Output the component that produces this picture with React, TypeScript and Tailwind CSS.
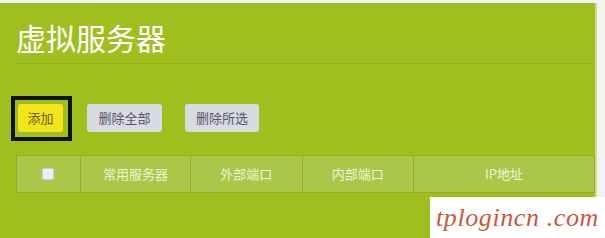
import React from "react";

const cols = [
  { w: 64, label: "" },
  { w: 111, label: "常用服务器" },
  { w: 112, label: "外部端口" },
  { w: 112, label: "内部端口" },
  { w: 182, label: "IP地址" },
];

export default function App() {
  const cjk = { fontFamily: '"Noto Sans CJK SC", "Noto Sans", sans-serif' };
  return (
    <div className="relative w-[605px] h-[238px] overflow-hidden bg-[#f3f3f3] pt-[3px]" style={cjk}>
      <div className="w-[597px] h-[235px] bg-[#a1be1f] border-r-2 border-[#cfe08c] pl-[16px] flex flex-col">
        <div className="pt-[16px] h-[61px] border-b border-[#95b21a] text-[30px] leading-[36px] text-white">
          虚拟服务器
        </div>
        <div className="mt-[40px] ml-[2px] flex items-center gap-[24px] h-[28px]">
          <div className="relative">
            <div className="w-[45px] h-[28px] rounded-[3px] bg-[#f3e51c] text-[#6b5e1a] text-[13px] flex items-center justify-center">
              添加
            </div>
            <div className="absolute left-[-7px] top-[-8px] w-[61px] h-[45px] border-[4px] border-[#111]" />
          </div>
          <div className="w-[75px] h-[28px] rounded-[3px] bg-[#d9dbe0] text-[#57546a] text-[13px] flex items-center justify-center">
            删除全部
          </div>
          <div className="w-[74px] h-[28px] rounded-[3px] bg-[#d9dbe0] text-[#57546a] text-[13px] flex items-center justify-center -ml-px">
            删除所选
          </div>
        </div>
        <div className="mt-[23px] flex h-[38px] border border-[#8ead19] bg-[#abc74a]">
          {cols.map((c, i) => (
            <div
              key={i}
              className={`h-full flex items-center justify-center text-[13px] text-[#eef4d8] ${i > 0 ? "border-l border-[#93b01c]" : ""}`}
              style={{ width: c.w - (i === 0 ? 1 : 0) }}
            >
              {i === 0 ? (
                <div className="w-[12px] h-[12px] rounded-[2px] bg-[#eceef6] border border-[#c9cde0]" />
              ) : (
                c.label
              )}
            </div>
          ))}
        </div>
      </div>
      <div className="absolute left-[430px] top-[197px] w-[175px] h-[41px] bg-white flex items-center pl-[6px]">
        <span
          className="italic text-[26px] text-[#c9583f] leading-none tracking-[0.6px]"
          style={{ fontFamily: '"Liberation Serif", serif' }}
        >
          tplogincn .com
        </span>
      </div>
    </div>
  );
}
